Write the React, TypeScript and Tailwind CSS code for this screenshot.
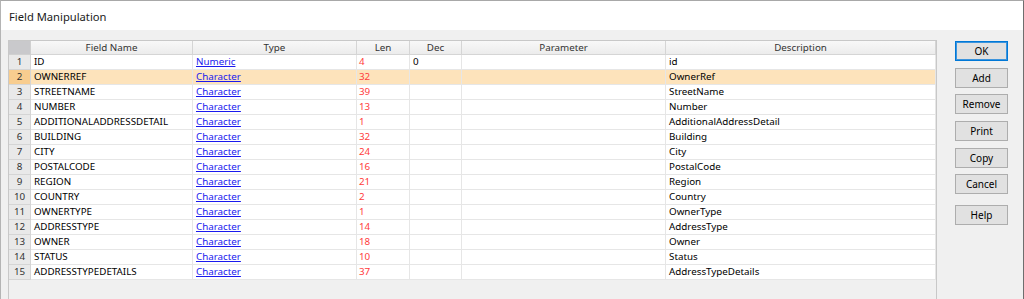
const fields = [
  { name: 'ID', type: 'Numeric', len: '4', dec: '0', desc: 'id' },
  { name: 'OWNERREF', type: 'Character', len: '32', dec: '', desc: 'OwnerRef' },
  { name: 'STREETNAME', type: 'Character', len: '39', dec: '', desc: 'StreetName' },
  { name: 'NUMBER', type: 'Character', len: '13', dec: '', desc: 'Number' },
  { name: 'ADDITIONALADDRESSDETAIL', type: 'Character', len: '1', dec: '', desc: 'AdditionalAddressDetail' },
  { name: 'BUILDING', type: 'Character', len: '32', dec: '', desc: 'Building' },
  { name: 'CITY', type: 'Character', len: '24', dec: '', desc: 'City' },
  { name: 'POSTALCODE', type: 'Character', len: '16', dec: '', desc: 'PostalCode' },
  { name: 'REGION', type: 'Character', len: '21', dec: '', desc: 'Region' },
  { name: 'COUNTRY', type: 'Character', len: '2', dec: '', desc: 'Country' },
  { name: 'OWNERTYPE', type: 'Character', len: '1', dec: '', desc: 'OwnerType' },
  { name: 'ADDRESSTYPE', type: 'Character', len: '14', dec: '', desc: 'AddressType' },
  { name: 'OWNER', type: 'Character', len: '18', dec: '', desc: 'Owner' },
  { name: 'STATUS', type: 'Character', len: '10', dec: '', desc: 'Status' },
  { name: 'ADDRESSTYPEDETAILS', type: 'Character', len: '37', dec: '', desc: 'AddressTypeDetails' },
];

const headers = ['Field Name', 'Type', 'Len', 'Dec', 'Parameter', 'Description'];
const buttons = ['OK', 'Add', 'Remove', 'Print', 'Copy', 'Cancel'];

const cols = 'grid grid-cols-[22px_162px_164px_53px_52px_204px_270px]';

export default function App() {
  return (
    <div className="relative h-[299px] w-[1024px] overflow-hidden border-l border-r border-t border-l-[#b4b4b4] border-r-[#6e6e6e] border-t-[#a8a8a8] bg-[#f0f0f0] font-['Noto_Sans','Liberation_Sans',sans-serif] text-[9.8px] leading-none text-black">
      <div className="flex h-[29px] items-center bg-white pl-[8px] pt-[3px] text-[11.2px] text-[#1a1a1a]">Field Manipulation</div>

      <div className="flex pl-[7px] pt-[10px]">
        <div className="h-[270px] w-[929px] border border-[#c8c8c8] bg-[#f0f0f0]">
          {/* header */}
          <div className={`${cols} h-[14px]`}>
            <div className="border-r border-b border-[#d0d0d0] bg-[#c9c9cc]" />
            {headers.map((h) => (
              <div
                key={h}
                className="flex items-center justify-center border-r border-b border-[#d5d5d5] bg-gradient-to-b from-[#f8f8f8] to-[#ececec] text-[#333]"
              >
                {h}
              </div>
            ))}
          </div>

          {fields.map((f, i) => {
            const sel = i === 1;
            const cell = `flex items-center border-r border-b border-[#e6e6e6] pl-[3px] ${sel ? 'bg-[#fde3bb]' : 'bg-white'}`;
            return (
              <div key={f.name} className={`${cols} h-[15px]`}>
                <div
                  className={`flex items-center justify-center border-r border-b border-[#d5d5d5] text-[#333] ${
                    sel ? 'bg-[#f8cd8f]' : 'bg-[#e9e9e9]'
                  }`}
                >
                  {i + 1}
                </div>
                <div className={cell}>{f.name}</div>
                <div className={cell}>
                  <span className="text-[#1a1aee] underline underline-offset-[1px]">{f.type}</span>
                </div>
                <div className={`${cell} !pl-[2px] text-[#ff3b3b]`}>{f.len}</div>
                <div className={cell}>{f.dec}</div>
                <div className={cell} />
                <div className={cell}>{f.desc}</div>
              </div>
            );
          })}
        </div>

        <div className="ml-[18px] flex flex-col gap-[6.65px] pt-[1px]">
          {buttons.map((b) => (
            <button
              key={b}
              className={`flex h-[20px] w-[53px] items-center justify-center bg-[#e1e1e1] text-[10px] text-black ${
                b === 'OK' ? 'border border-[#0078d7] shadow-[inset_0_0_0_1px_#3c94dc]' : 'border border-[#adadad]'
              }`}
            >
              {b}
            </button>
          ))}
          <button className="mt-[4px] flex h-[20px] w-[53px] items-center justify-center border border-[#adadad] bg-[#e1e1e1] text-[10px] text-black">
            Help
          </button>
        </div>
      </div>
    </div>
  );
}
